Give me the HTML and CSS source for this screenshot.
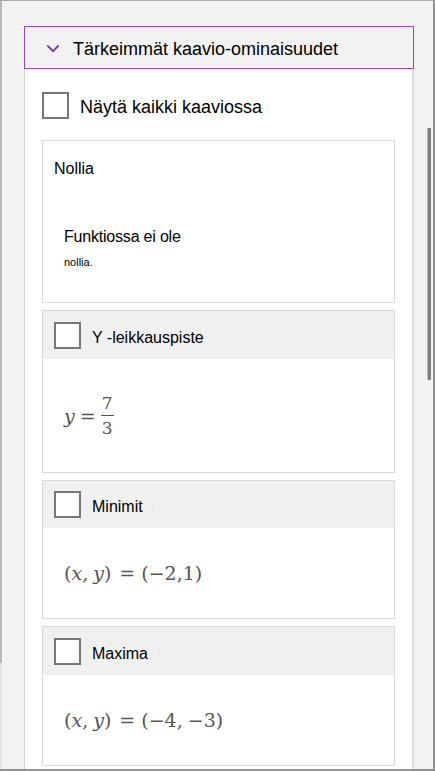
FILE: index.html
```html
<!DOCTYPE html>
<html lang="fi">
<head>
<meta charset="utf-8">
<title>Tärkeimmät kaavio-ominaisuudet</title>
<link rel="stylesheet" href="styles.css">
</head>
<body>
<div class="frame">
  <div class="main">
    <div class="section-header">
      <svg class="chevron" width="12" height="8" viewBox="0 0 12 8" aria-hidden="true">
        <path d="M1 1.2 L6 6.2 L11 1.2" fill="none" stroke="#7b38b0" stroke-width="2" stroke-linecap="square"/>
      </svg>
      <span class="section-title">Tärkeimmät kaavio-ominaisuudet</span>
    </div>
    <div class="panel">
      <label class="check-row">
        <span class="checkbox"></span>
        <span class="check-label">Näytä kaikki kaaviossa</span>
      </label>
      <div class="cards">
        <div class="card card-info">
          <div class="info-title">Nollia</div>
          <div class="info-desc">
            <div class="info-line">Funktiossa ei ole</div>
            <div class="info-small">nollia.</div>
          </div>
        </div>

        <div class="card">
          <div class="card-head">
            <span class="checkbox"></span>
            <span class="card-label">Y -leikkauspiste</span>
          </div>
          <div class="card-body tall">
            <span class="math"><i class="var">y</i><span class="eq tight">=</span><span class="frac"><span class="num">7</span><span class="bar"></span><span class="den">3</span></span></span>
          </div>
        </div>

        <div class="card">
          <div class="card-head short">
            <span class="checkbox"></span>
            <span class="card-label">Minimit</span><span class="caret"></span>
          </div>
          <div class="card-body">
            <span class="math">(<i class="var">x</i>,<span class="thin"></span><i class="var">y</i>)<span class="eq">=</span>(−2,1)</span>
          </div>
        </div>

        <div class="card">
          <div class="card-head">
            <span class="checkbox"></span>
            <span class="card-label">Maxima</span><span class="caret"></span>
          </div>
          <div class="card-body">
            <span class="math">(<i class="var">x</i>,<span class="thin"></span><i class="var">y</i>)<span class="eq">=</span>(−4,<span class="thin"></span>−3)</span>
          </div>
        </div>
      </div>
    </div>
  </div>
  <div class="gutter">
    <div class="thumb"></div>
  </div>
</div>
</body>
</html>
```

FILE: styles.css
```css
html, body {
  margin: 0;
  padding: 0;
  background: #f2f2f2;
}

body {
  font-family: "Liberation Sans", Arial, sans-serif;
  color: #000;
}

.frame {
  width: 435px;
  height: 771px;
  box-sizing: border-box;
  border-top: 1px solid #a8a8a8;
  border-right: 2px solid #939393;
  border-bottom: 2px solid #939393;
  padding-left: 2px;
  background:
    linear-gradient(#b9b9b9, #b9b9b9) 0 0 / 2px 662px no-repeat,
    linear-gradient(#e2e2e2, #e2e2e2) 0 662px / 2px 100% no-repeat,
    #f2f2f2;
  display: flex;
  overflow: hidden;
}

.main {
  width: 412px;
  flex: none;
  box-sizing: border-box;
  padding-left: 22px;
  padding-top: 25px;
  display: flex;
  flex-direction: column;
}

.section-header {
  height: 43px;
  box-sizing: border-box;
  border: 1px solid #9149c9;
  background: #f2f2f2;
  display: flex;
  align-items: center;
  padding-left: 22px;
}

.chevron {
  flex: none;
  margin-top: 2px;
}

.section-title {
  font-size: 18px;
  margin-left: 14px;
  padding-top: 3px;
  white-space: nowrap;
}

.panel {
  flex: 1;
  background: #fff;
  border-left: 1px solid #d5d5d5;
  border-right: 2px solid #dcdcdc;
  padding: 23px 17px 0 17px;
  display: flex;
  flex-direction: column;
}

.check-row {
  display: flex;
  align-items: center;
  gap: 11px;
}

.checkbox {
  width: 27px;
  height: 27px;
  box-sizing: border-box;
  border: 2px solid #777;
  background: #fff;
  flex: none;
}

.check-label {
  font-size: 18px;
  padding-top: 3px;
}

.cards {
  margin-top: 21px;
  display: flex;
  flex-direction: column;
  gap: 7px;
}

.card {
  border: 1px solid #dadada;
  background: #fff;
  display: flex;
  flex-direction: column;
}

.card-info {
  height: 163px;
  box-sizing: border-box;
  padding: 18px 11px 0 11px;
}

.info-title {
  font-size: 16px;
  line-height: 20px;
}

.info-desc {
  margin-top: 48px;
  margin-left: 10px;
}

.info-line {
  font-size: 16px;
  line-height: 20px;
  letter-spacing: -0.2px;
}

.info-small {
  font-size: 11px;
  line-height: 14px;
  margin-top: 8px;
}

.card-head {
  height: 48px;
  background: #f0f0f0;
  display: flex;
  align-items: center;
  padding-left: 11px;
}

.card-head.short {
  height: 47px;
}

.card-label {
  font-size: 16px;
  margin-left: 11px;
  padding-top: 5px;
}

.caret {
  width: 1px;
  height: 11px;
  background: #e4e4e4;
  margin-left: 10px;
  margin-top: 5px;
}

.card-body {
  height: 90px;
  display: flex;
  align-items: center;
  padding-left: 21px;
}

.card-body.tall {
  height: 113px;
}

.math {
  font-family: "DejaVu Serif", "Liberation Serif", serif;
  font-size: 19px;
  color: #545454;
  display: inline-flex;
  align-items: center;
  white-space: nowrap;
}

.var {
  font-style: italic;
}

.thin {
  display: inline-block;
  width: 5px;
}

.eq {
  margin: 0 6px 0 8px;
}

.eq.tight {
  margin: 0 5px 0 5px;
}

.frac {
  display: inline-flex;
  flex-direction: column;
  align-items: center;
  font-size: 17px;
  line-height: 17px;
}

.frac .num {
  padding-bottom: 3px;
}

.frac .bar {
  width: 13px;
  height: 1px;
  background: #545454;
}

.frac .den {
  padding-top: 4px;
}

.gutter {
  flex: 1;
  padding-top: 127px;
}

.thumb {
  width: 4px;
  height: 252px;
  margin-left: 13px;
  background: linear-gradient(to right, #b5b5b5 0, #b5b5b5 1px, #808080 1px, #808080 100%);
  border-radius: 1px;
}
```
